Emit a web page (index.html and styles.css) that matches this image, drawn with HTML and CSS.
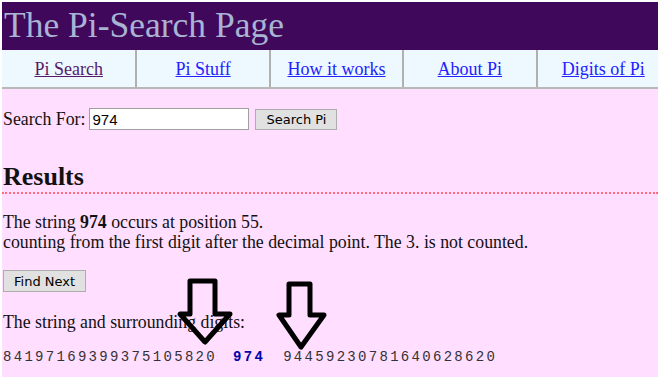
FILE: index.html
```html
<!DOCTYPE html>
<html>
<head>
  <title>The Pi-Search Page</title>
  <link rel="stylesheet" href="styles.css">
</head>
<body>
  <div id="page">
    <div id="header">The Pi-Search Page</div>
    <div id="nav">
      <a href="#" class="visited">Pi Search</a>
      <a href="#">Pi Stuff</a>
      <a href="#">How it works</a>
      <a href="#">About Pi</a>
      <a href="#">Digits of Pi</a>
    </div>

    <form id="search">
      <label for="q">Search For:</label>
      <input type="text" id="q" value="974">
      <button type="button" class="btn">Search Pi</button>
    </form>

    <h2 id="results">Results</h2>

    <p class="info">The string <b>974</b> occurs at position 55.<br>
    counting from the first digit after the decimal point. The 3. is not counted.</p>

    <button type="button" class="btn" id="find-next">Find Next</button>

    <p class="info" id="surround">The string and surrounding digits:</p>

    <div id="digits">84197169399375105820<span class="gap"></span><b>974</b><span class="gap gap-2"></span>94459230781640628620</div>

    <svg class="arrow arrow-1" width="60" height="72" viewBox="0 0 60 72">
      <polygon points="15,4 40,4 40,37 55,37 30,65 5,37 15,37" />
    </svg>
    <svg class="arrow arrow-2" width="60" height="72" viewBox="0 0 60 72">
      <polygon points="14,4 35,4 35,35 49,35 26,67 4,35 14,35" />
    </svg>
  </div>
</body>
</html>
```

FILE: styles.css
```css
body {
  margin: 0;
  padding: 2px 2px 0 2px;
  background: #fff;
}

#page {
  position: relative;
  overflow: hidden;
  background: #ffdeff;
  min-height: 375px;
  font-family: "Liberation Serif", "Times New Roman", serif;
  font-size: 17.8px;
  color: #111;
}

#header {
  background: #40085a;
  color: #a8b4d4;
  font-size: 35.5px;
  height: 48px;
  line-height: 46px;
  padding-left: 2px;
}

#nav {
  display: flex;
  background: #eef8ff;
  border-bottom: 2px solid #b8b8b8;
}

#nav a {
  flex: none;
  width: 131.4px;
  text-align: center;
  font-size: 18px;
  color: #2222ff;
  height: 37px;
  line-height: 39px;
  border-left: 2px solid #b0b0b0;
}

#nav a:first-child {
  border-left: none;
  width: 133.4px;
}

#nav a.visited {
  color: #551a6b;
}

#search {
  margin: 19px 0 0 1px;
  display: flex;
  align-items: center;
}

#search input {
  width: 154px;
  height: 18px;
  margin: 0 6px 0 4px;
  padding: 1px 2px;
  border: 1px solid #a0a0a0;
  font-family: "Liberation Sans", Arial, sans-serif;
  font-size: 15px;
}

.btn {
  font-family: "DejaVu Sans", Tahoma, sans-serif;
  font-size: 13px;
  background: #e1e1e1;
  border: 1px solid #adadad;
  padding: 1px 10px;
  height: 21px;
}

#results {
  font-size: 26px;
  margin: 32px 0 0 0;
  padding: 0 0 0 1px;
  border-bottom: 2px dotted #ff6a80;
}

.info {
  margin: 18px 0 0 1px;
  line-height: 20px;
}

#find-next {
  margin: 18px 0 0 1px;
  height: 22px;
  padding: 1px 10px;
}

#surround {
  margin-top: 20px;
}

#digits {
  font-family: "Liberation Mono", "Courier New", monospace;
  font-size: 14px;
  letter-spacing: 2.3px;
  color: #333;
  margin: 17px 0 0 1px;
}

#digits b {
  color: #0000aa;
}

.gap {
  display: inline-block;
  width: 16px;
}

.gap-2 {
  width: 18px;
}

.arrow {
  position: absolute;
}

.arrow polygon {
  fill: none;
  stroke: #000;
  stroke-width: 5;
  stroke-linejoin: round;
}

.arrow-1 {
  left: 173px;
  top: 275px;
}

.arrow-2 {
  left: 273px;
  top: 278px;
}
```
